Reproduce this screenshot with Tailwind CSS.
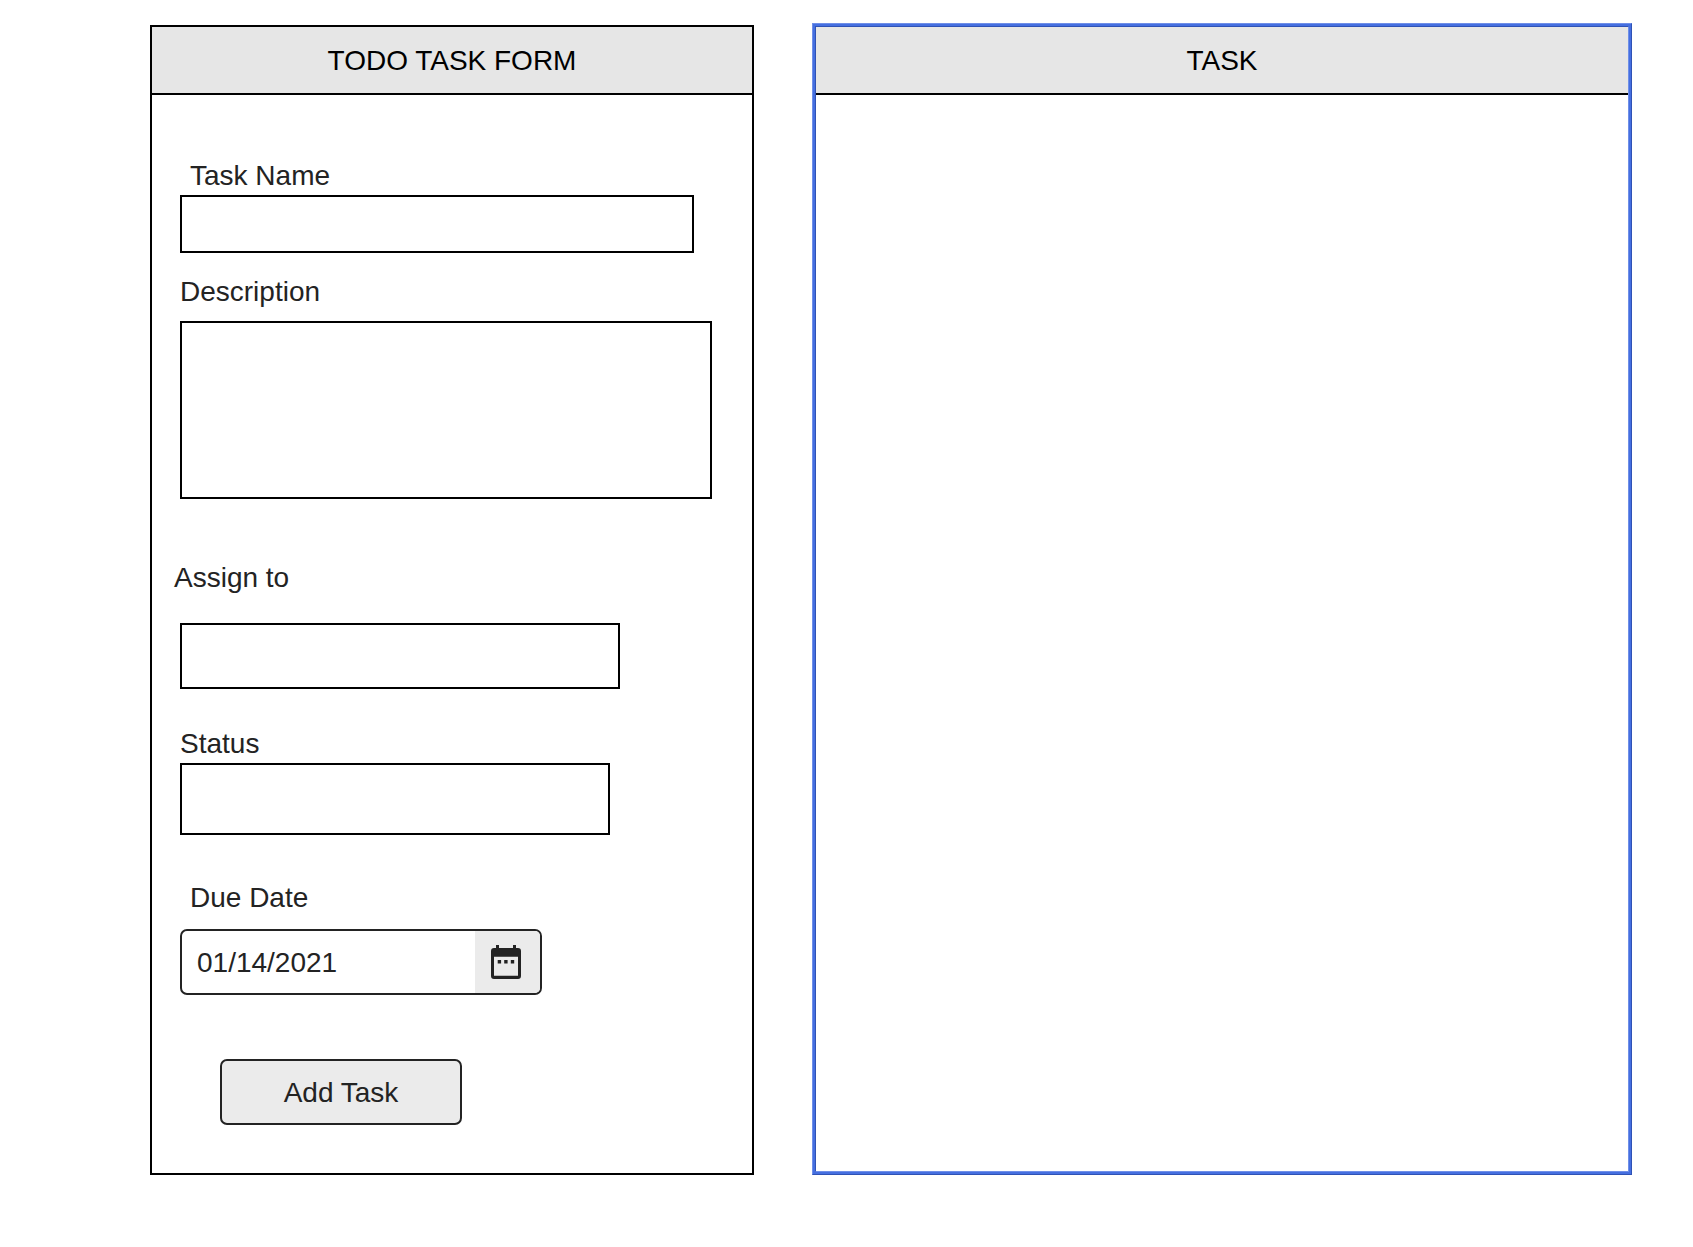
<!DOCTYPE html>
<html lang="en">
<head>
<meta charset="utf-8">
<meta name="viewport" content="width=device-width, initial-scale=1">
<title>Todo Task Form</title>
<script src="https://cdn.jsdelivr.net/npm/@tailwindcss/browser@4"></script>
</head>
<body class="bg-white text-[28px] leading-[34px] text-[#232323] font-['Liberation_Sans',Arial,sans-serif]">
<main class="grid grid-cols-[604fr_820fr] gap-[58px] pt-[23px] pb-[72px] pl-[150px] pr-[61px]">

  <section class="mt-0.5 border-2 border-black">
    <h1 class="flex h-[68px] items-center justify-center border-b-2 border-black bg-[#e6e6e6] pt-0.5 text-black">TODO TASK FORM</h1>
    <form class="flex flex-col items-start pt-16 pb-12 pl-[22px] pr-10">
      <label for="task-name" class="ml-4">Task Name</label>
      <input id="task-name" type="text" class="mt-0.5 ml-1.5 h-[58px] w-full max-w-[514px] border-2 border-black px-3 outline-none">

      <label for="description" class="mt-[22px] ml-1.5">Description</label>
      <textarea id="description" class="mt-3 ml-1.5 h-[178px] w-full max-w-[532px] resize-none border-2 border-black px-3 py-2 outline-none"></textarea>

      <label for="assign-to" class="mt-[62px]">Assign to</label>
      <input id="assign-to" type="text" class="mt-7 ml-1.5 h-[66px] w-full max-w-[440px] border-2 border-black px-3 outline-none">

      <label for="status" class="mt-[38px] ml-1.5">Status</label>
      <input id="status" type="text" class="mt-0.5 ml-1.5 h-[72px] w-full max-w-[430px] border-2 border-black px-3 outline-none">

      <label for="due-date" class="mt-[46px] ml-4">Due Date</label>
      <div class="mt-3.5 ml-1.5 flex h-[66px] w-full max-w-[362px] overflow-hidden rounded-[7px] border-2 border-[#232323]">
        <input id="due-date" type="text" value="01/14/2021" class="min-w-0 flex-1 px-[15px] pt-0.5 outline-none">
        <button type="button" aria-label="Open calendar" class="flex w-[65px] items-center justify-center bg-[#ebebeb] pr-1">
          <svg class="h-[34px] w-[30px]" viewBox="0 0 30 34" fill="#232323" aria-hidden="true">
            <path fill-rule="evenodd" d="M5 0H8V3H22V0H25V3H27Q30 3 30 6V31Q30 34 27 34H3Q0 34 0 31V6Q0 3 3 3H5ZM3 11.8V30.8H27V11.8Z"/>
            <path d="M6.7 15h3.4v3.6H6.7zM13.2 15h3.4v3.6h-3.4zM19.8 15h3.4v3.6h-3.4z"/>
          </svg>
        </button>
      </div>

      <button type="submit" class="mt-16 ml-[46px] h-[66px] w-[242px] rounded-[7px] border-2 border-[#232323] bg-[#ebebeb] pt-0.5">Add Task</button>
    </form>
  </section>

  <!-- Selected panel: bevelled blue frame made of three rings -->
  <section class="flex border border-t-[#6f8fe8] border-l-[#6f8fe8] border-r-[#2f52b5] border-b-[#2f52b5]">
    <div class="flex flex-1 border-2 border-[#456fe0]">
      <div class="flex-1 border border-t-[#2f52b5] border-l-[#2f52b5] border-r-[#6f8fe8] border-b-[#6f8fe8]">
        <h2 class="flex h-[68px] items-center justify-center border-b-2 border-black bg-[#e6e6e6] pt-0.5 text-black">TASK</h2>
      </div>
    </div>
  </section>

</main>
</body>
</html>
